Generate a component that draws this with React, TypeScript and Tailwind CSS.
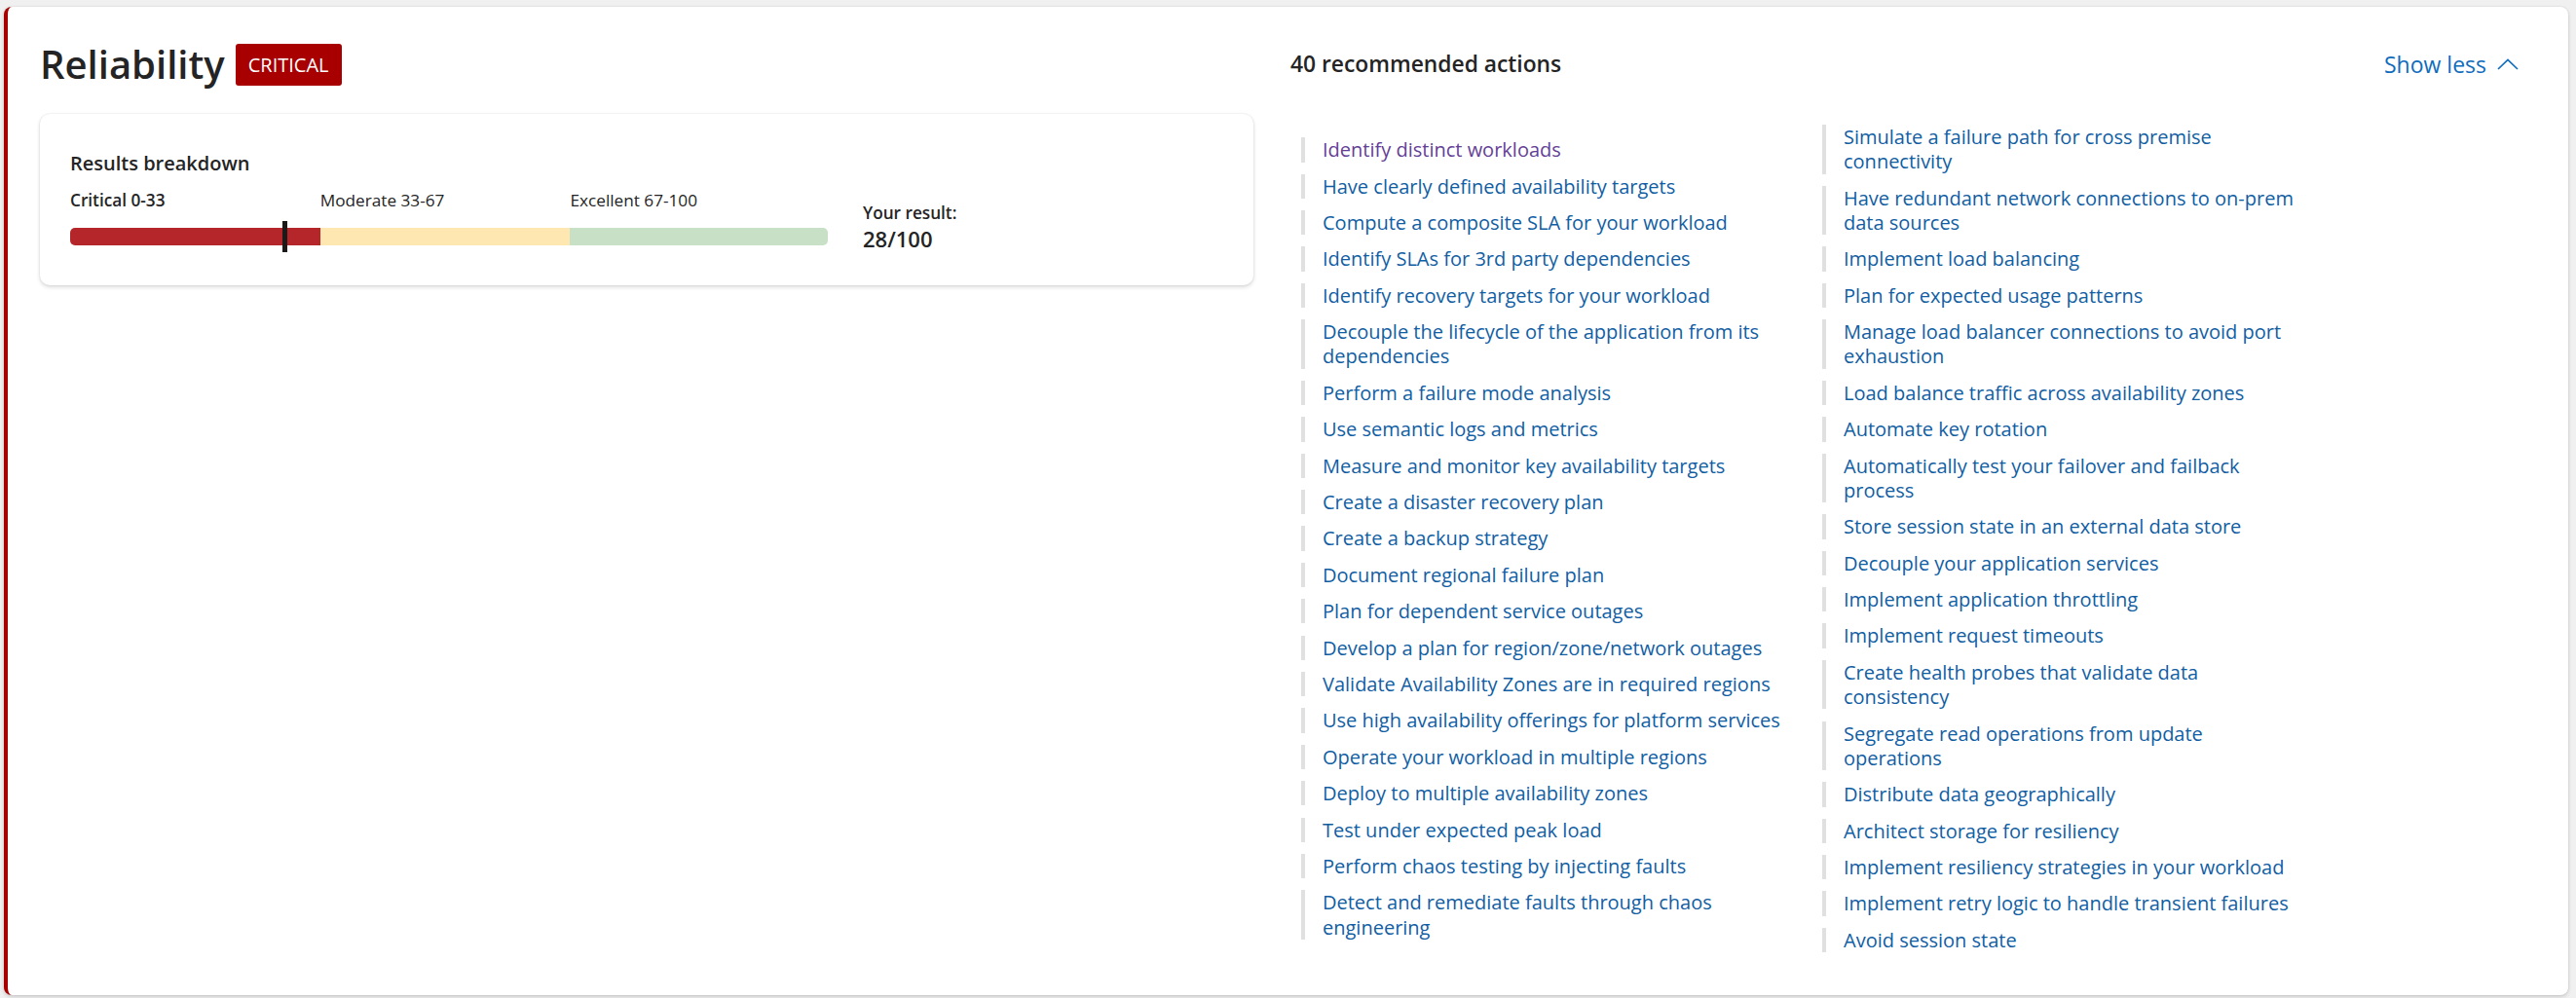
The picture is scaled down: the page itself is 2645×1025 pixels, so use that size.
import React from 'react';

const COLUMN_ONE = [
  'Identify distinct workloads',
  'Have clearly defined availability targets',
  'Compute a composite SLA for your workload',
  'Identify SLAs for 3rd party dependencies',
  'Identify recovery targets for your workload',
  'Decouple the lifecycle of the application from its dependencies',
  'Perform a failure mode analysis',
  'Use semantic logs and metrics',
  'Measure and monitor key availability targets',
  'Create a disaster recovery plan',
  'Create a backup strategy',
  'Document regional failure plan',
  'Plan for dependent service outages',
  'Develop a plan for region/zone/network outages',
  'Validate Availability Zones are in required regions',
  'Use high availability offerings for platform services',
  'Operate your workload in multiple regions',
  'Deploy to multiple availability zones',
  'Test under expected peak load',
  'Perform chaos testing by injecting faults',
  'Detect and remediate faults through chaos engineering',
];

const COLUMN_TWO = [
  'Simulate a failure path for cross premise connectivity',
  'Have redundant network connections to on-prem data sources',
  'Implement load balancing',
  'Plan for expected usage patterns',
  'Manage load balancer connections to avoid port exhaustion',
  'Load balance traffic across availability zones',
  'Automate key rotation',
  'Automatically test your failover and failback process',
  'Store session state in an external data store',
  'Decouple your application services',
  'Implement application throttling',
  'Implement request timeouts',
  'Create health probes that validate data consistency',
  'Segregate read operations from update operations',
  'Distribute data geographically',
  'Architect storage for resiliency',
  'Implement resiliency strategies in your workload',
  'Implement retry logic to handle transient failures',
  'Avoid session state',
];

// keep hyphenated words like "on-prem" on one line
const renderLabel = (label: string) =>
  label.split(' ').map((word, i) => (
    <React.Fragment key={i}>
      {i > 0 && ' '}
      {word.includes('-') ? <span className="whitespace-nowrap">{word}</span> : word}
    </React.Fragment>
  ));

const ActionItem = ({ label, visited, maxWidth }: { label: string; visited?: boolean; maxWidth: string }) => (
  <li className={`border-l-4 border-[#e0e0e0] pl-[18px] text-[20px] leading-[25.3px] ${maxWidth}`}>
    <a href="#" className={visited ? 'text-[#643f95]' : 'text-[#115ea3]'}>
      {renderLabel(label)}
    </a>
  </li>
);

const ResultsBreakdown = () => (
  <div className="rounded-[10px] bg-white h-[176px] px-[31px] pt-[37px] shadow-[0_0_2px_rgba(0,0,0,0.12),0_2px_4px_rgba(0,0,0,0.14)]">
    <div className="text-[20px] leading-[28px] font-semibold text-[#242424]">Results breakdown</div>
    <div className="flex items-start">
      <div className="w-[778px] mt-[12px]">
        {/* Range labels */}
        <div className="flex text-[17.2px] leading-[24px] text-[#242424]">
          <span className="w-[33%] font-semibold">Critical 0-33</span>
          <span className="w-[33%]">Moderate 33-67</span>
          <span className="w-[34%]">Excellent 67-100</span>
        </div>
        {/* Score bar */}
        <div className="relative mt-[16px]">
          <div className="flex h-[18px] rounded-[5px] overflow-hidden">
            <div className="w-[33%] bg-[#b4262a]" />
            <div className="w-[33%] bg-[#fee7b0]" />
            <div className="w-[34%] bg-[#c8e0c5]" />
          </div>
          <div className="absolute top-[-7px] left-[28%] w-[5px] h-[32px] bg-[#1b1a19]" />
        </div>
      </div>
      <div className="ml-[36px] mt-[26px] text-[#242424]">
        <div className="text-[17.2px] leading-[22px] font-semibold">Your result:</div>
        <div className="text-[22px] leading-[30px] font-semibold">28/100</div>
      </div>
    </div>
  </div>
);

export default function App() {
  return (
    <div
      className="min-h-screen bg-[#f0f0f0] pt-[7px] pl-[4px] pr-[8px] pb-[6px]"
      style={{ fontFamily: '"Open Sans", "Noto Sans", Arial, sans-serif' }}
    >
      <div className="flex bg-white rounded-lg border-l-4 border-[#a80000] pl-[33px] pr-[51px] pt-[31px] pb-[44px] shadow-[0_0_2px_rgba(0,0,0,0.12),0_2px_4px_rgba(0,0,0,0.14)]">
        {/* Left: title and breakdown */}
        <div className="w-[1246px] shrink-0">
          <div className="flex items-center h-[56px] gap-[11px]">
            <h2 className="text-[40px] leading-[56px] font-semibold text-[#242424]">Reliability</h2>
            <span className="bg-[#a80000] text-white text-[20px] leading-[43px] h-[43px] px-[13px] rounded-[3px]">
              CRITICAL
            </span>
          </div>
          <div className="mt-[23px]">
            <ResultsBreakdown />
          </div>
        </div>

        {/* Right: recommended actions */}
        <div className="flex-1 ml-[38px]">
          <div className="flex items-center justify-between h-[56px]">
            <span className="text-[22.8px] font-semibold text-[#242424]">40 recommended actions</span>
            <button className="flex items-center gap-[11px] text-[23px] text-[#0f6cbd]">
              Show less
              <svg width="22" height="12" viewBox="0 0 22 12" fill="none">
                <polyline points="1,11 11,1.5 21,11" stroke="#0f6cbd" strokeWidth="1.7" />
              </svg>
            </button>
          </div>
          <div className="flex items-center mt-[34px] ml-[11px]">
            <ul className="w-[535px] flex flex-col gap-[12.1px]">
              {COLUMN_ONE.map((item, i) => (
                <ActionItem key={item} label={item} visited={i === 0} maxWidth="max-w-[511px]" />
              ))}
            </ul>
            <ul className="flex flex-col gap-[12.1px]">
              {COLUMN_TWO.map((item) => (
                <ActionItem key={item} label={item} maxWidth="max-w-[487px]" />
              ))}
            </ul>
          </div>
        </div>
      </div>
    </div>
  );
}
